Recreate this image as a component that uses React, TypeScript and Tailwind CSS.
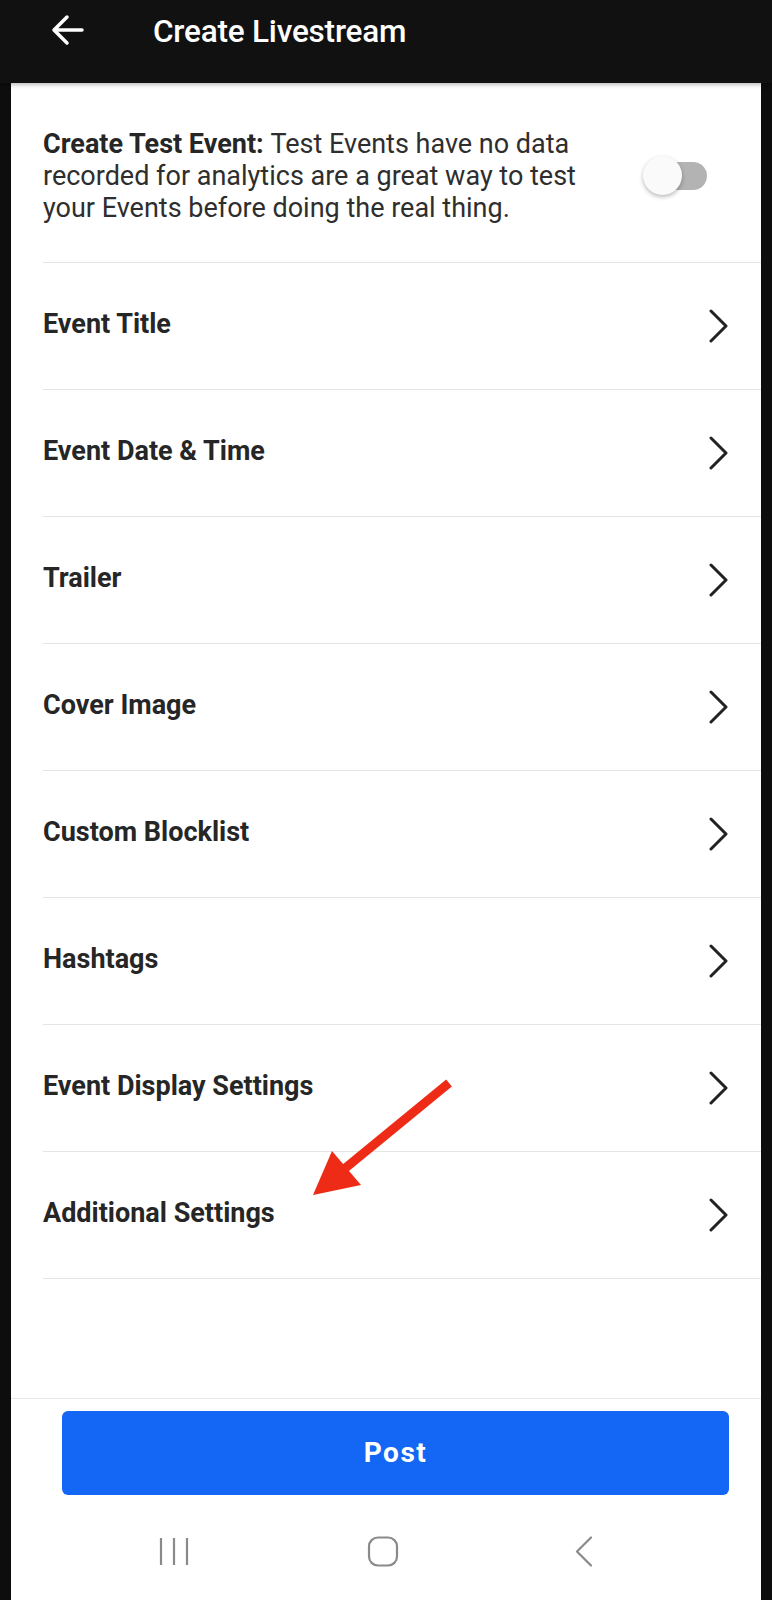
import { useState } from "react";

const rows = [
  "Event Title",
  "Event Date & Time",
  "Trailer",
  "Cover Image",
  "Custom Blocklist",
  "Hashtags",
  "Event Display Settings",
  "Additional Settings",
];

function Chevron() {
  return (
    <svg width="22" height="34" viewBox="0 0 22 34" fill="none">
      <path d="M3 2l15 15L3 32" stroke="#222" strokeWidth="3" strokeLinecap="round" strokeLinejoin="round" />
    </svg>
  );
}

export default function App() {
  const [testEvent, setTestEvent] = useState(false);

  return (
    <div className="relative w-[772px] h-[1600px] bg-[#0d0d0d] font-['Roboto',sans-serif] overflow-hidden">
      {/* header */}
      <div className="h-[83px] flex items-start bg-[#111] shadow-[0_2px_4px_rgba(0,0,0,0.25)] relative z-10">
        <button className="ml-[50px] mt-[13px] w-[36px] h-[34px] flex items-center justify-center">
          <svg width="34" height="32" viewBox="0 0 34 32" fill="none">
            <path d="M3 16h28M16 3L3 16l13 13" stroke="#fff" strokeWidth="3.5" strokeLinecap="round" strokeLinejoin="round" />
          </svg>
        </button>
        <h1 className="ml-[67px] mt-[10px] leading-[44px] text-[31.5px] font-medium text-white tracking-[-0.2px]">
          Create Livestream
        </h1>
      </div>

      {/* body */}
      <div className="mx-[11px] h-[1517px] bg-white flex flex-col">
        <div className="ml-[32px] h-[180px] border-b border-[#e4e4e4] flex items-center justify-between pr-[54px] pt-[6px]">
          <p className="w-[562px] text-[27px] leading-[32px] text-[#2e2e2e]">
            <span className="font-bold text-[#262626]">Create Test Event: </span>
            Test Events have no data recorded for analytics are a great way to test your Events before doing the real
            thing.
          </p>
          <button
            onClick={() => setTestEvent(!testEvent)}
            className="relative w-[64px] h-[40px] flex items-center"
          >
            <span className="absolute left-[7px] right-0 h-[28px] rounded-full bg-[#b3b3b3]" />
            <span className="absolute left-0 w-[39px] h-[39px] rounded-full bg-[#fafafa] shadow-[0_2px_4px_rgba(0,0,0,0.28)]" />
          </button>
        </div>

        {rows.map(r => (
          <div
            key={r}
            className="ml-[32px] h-[127px] border-b border-[#e4e4e4] flex items-center justify-between pr-[31px]"
          >
            <span className="text-[27px] font-bold text-[#262626] -mt-[4px]">{r}</span>
            <Chevron />
          </div>
        ))}

        <div className="h-[119px]" />

        <div className="border-t border-[#e6e6e6] flex-1 flex flex-col">
          <div className="pt-[12px] pl-[51px] pr-[32px]">
            <button className="w-full h-[84px] rounded-[6px] bg-[#1466f5] text-white text-[28px] font-bold tracking-[1.5px]">
              Post
            </button>
          </div>
          <div className="mt-[41px] flex items-center h-[31px]">
            <svg className="ml-[147px]" width="32" height="31" viewBox="0 0 32 31" fill="none">
              <path d="M3 2v27M16 2v27M29 2v27" stroke="#8a8a8a" strokeWidth="2.2" />
            </svg>
            <svg className="ml-[177px]" width="32" height="31" viewBox="0 0 32 31" fill="none">
              <rect x="2" y="1.5" width="28" height="28" rx="9" stroke="#8a8a8a" strokeWidth="2.2" />
            </svg>
            <svg className="ml-[175px]" width="20" height="31" viewBox="0 0 20 31" fill="none">
              <path d="M17 1.5L3 15.5l14 14" stroke="#8a8a8a" strokeWidth="2.2" strokeLinecap="round" strokeLinejoin="round" />
            </svg>
          </div>
        </div>
      </div>

      {/* annotation arrow */}
      <svg className="absolute left-0 top-0 pointer-events-none" width="772" height="1600" viewBox="0 0 772 1600">
        <line x1="449" y1="1083" x2="343" y2="1170" stroke="#ee2b16" strokeWidth="9" />
        <polygon points="313,1195 332,1151 361,1185" fill="#ee2b16" />
      </svg>
    </div>
  );
}
